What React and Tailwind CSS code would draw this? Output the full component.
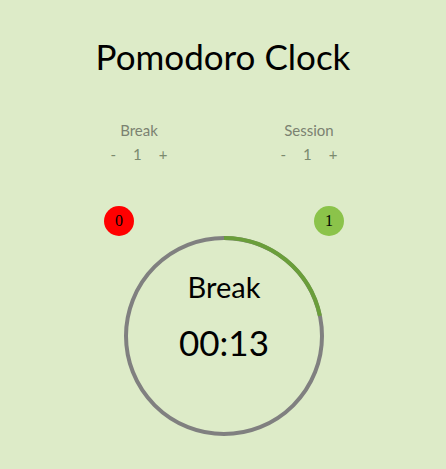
import React from 'react';

const R = 98;
const C = 2 * Math.PI * R;

const Control = ({ label, value }) => (
  <div className="w-[170px] flex flex-col items-center text-[15px] text-[#7b8271]">
    <div>{label}</div>
    <div className="flex gap-[17px] mt-[1px] text-[#7b8a6e]">
      <button>-</button>
      <span>{value}</span>
      <button>+</button>
    </div>
  </div>
);

export default function App() {
  const progress = 13 / 60;
  return (
    <div className="w-[446px] h-[469px] bg-[#ddebc8] flex flex-col items-center font-['Lato',sans-serif]">
      <h1 className="mt-[34px] text-[35px] leading-[44px] text-black">Pomodoro Clock</h1>
      <div className="flex mt-[41px] ml-[2px]">
        <Control label="Break" value="1" />
        <Control label="Session" value="1" />
      </div>
      <div className="relative w-[240px] h-[250px] mt-[41px] ml-[2px]">
        <div className="absolute left-0 top-0 w-[30px] h-[30px] rounded-full bg-[#ff0000] flex items-center justify-center text-[16px] font-['Liberation_Serif',serif]">0</div>
        <div className="absolute right-0 top-0 w-[30px] h-[30px] rounded-full bg-[#8bc34a] flex items-center justify-center text-[16px] font-['Liberation_Serif',serif]">1</div>
        <div className="absolute left-[19px] top-[29px] w-[202px] h-[202px]">
          <svg width="202" height="202" viewBox="0 0 202 202" className="absolute inset-0">
            <circle cx="101" cy="101" r={R} fill="none" stroke="#808080" strokeWidth="4" />
            <circle
              cx="101" cy="101" r={R} fill="none" stroke="#6a9e3a" strokeWidth="4"
              strokeDasharray={`${C * progress} ${C}`}
              transform="rotate(-90 101 101)"
            />
          </svg>
          <div className="relative w-full h-full flex flex-col items-center pt-[35px]">
            <div className="text-[29px] leading-[34px] text-black">Break</div>
            <div className="text-[35px] leading-[44px] mt-[16px] text-black">00:13</div>
          </div>
        </div>
      </div>
    </div>
  );
}
